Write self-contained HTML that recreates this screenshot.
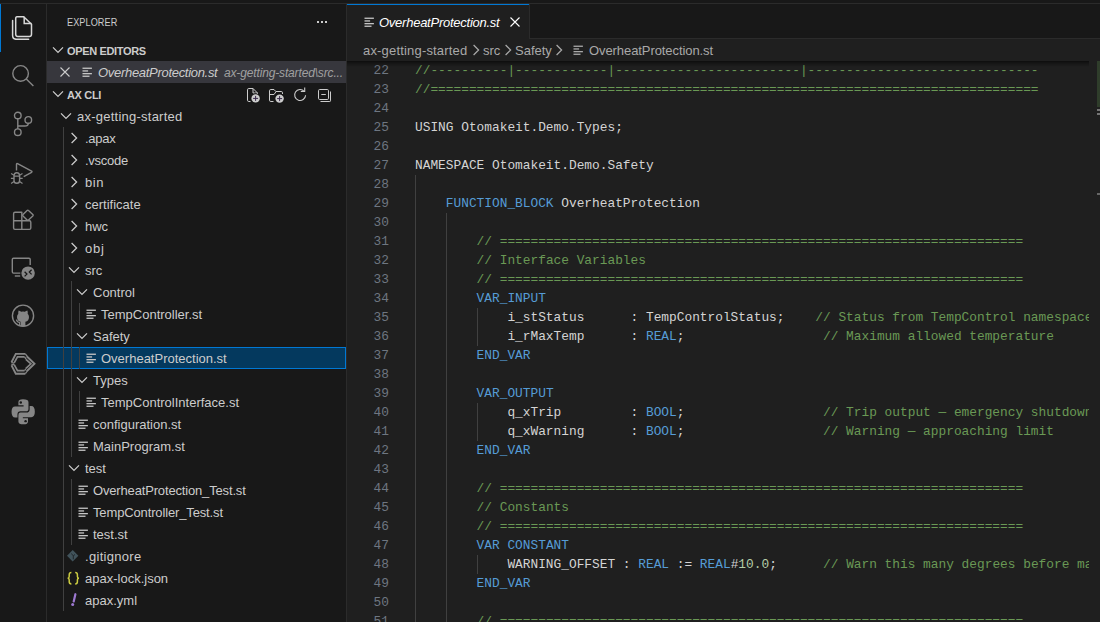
<!DOCTYPE html>
<html><head><meta charset="utf-8"><style>
*{margin:0;padding:0;box-sizing:border-box}
html,body{width:1100px;height:622px;overflow:hidden;background:#181818}
body{position:relative;font-family:"Liberation Sans",sans-serif;color:#cccccc}
.a{position:absolute}
#topline{left:0;top:3px;width:1100px;height:1px;background:#2b2b2b}
#act{left:0;top:4px;width:46px;height:618px;background:#181818}
#actb{left:46px;top:4px;width:1px;height:618px;background:#2b2b2b}
#side{left:47px;top:4px;width:299px;height:618px;background:#181818;overflow:hidden}
#sideb{left:346px;top:4px;width:1px;height:618px;background:#2b2b2b}
#ed{left:347px;top:4px;width:753px;height:618px;background:#1f1f1f;overflow:hidden}
.row{position:absolute;left:0;width:299px;height:22px;font-size:13px;line-height:24px;white-space:nowrap;color:#cccccc}
.lbl{position:absolute;top:0}
.hdr{font-weight:bold;font-size:11px}
.guide{position:absolute;width:1px;background:#404040}
.code{position:absolute;left:0;width:753px;height:19px;font-family:"Liberation Mono",monospace;font-size:12.83px;line-height:19px;white-space:pre;color:#d4d4d4}
.ln{position:absolute;left:0;width:42px;text-align:right;color:#6e7681}
.tx{position:absolute;left:68px}
.c{color:#6a9955}.k{color:#569cd6}.n{color:#b5cea8}
.eg{position:absolute;width:1px;background:#404040}
</style></head><body>
<div class="a" id="topline"></div>
<div class="a" id="act"></div><div class="a" id="actb"></div>
<div class="a" style="left:0;top:4px;width:1px;height:48px;background:#0078d4"></div>

<svg class="a" style="left:11px;top:16px" width="24" height="24" viewBox="0 0 24 24" fill="none" stroke="#d7d7d7" stroke-width="1.5">
<path d="M6 0.8 H12.7 L20.5 8.3 V18.2 Q20.5 20.5 18.3 20.5 H7 Q4.7 20.5 4.7 18.2 V2.9 Q4.7 0.8 6 0.8 Z" stroke-linejoin="round"/>
<path d="M13.2 0.8 V7.6 H20.5"/>
<path d="M1.6 4.5 V19.5 Q1.6 23.3 5.6 23.3 H17.6" stroke-linecap="round"/>
</svg>
<svg class="a" style="left:11px;top:63px" width="24" height="24" viewBox="0 0 24 24" fill="none" stroke="#868686" stroke-width="1.4">
<circle cx="9.6" cy="10.4" r="7.8"/><path d="M15.3 16.1 L22.4 23"/>
</svg>
<svg class="a" style="left:11px;top:111px" width="26" height="26" viewBox="0 0 26 26" fill="none" stroke="#868686" stroke-width="1.4">
<circle cx="6.8" cy="4.5" r="3.3"/><circle cx="6.8" cy="21.2" r="3.3"/><circle cx="17.3" cy="8.9" r="3.3"/>
<path d="M6.8 7.8 V17.9 M6.8 15 H13.8 Q17.3 15 17.3 12.2"/>
</svg>
<svg class="a" style="left:9px;top:159px" width="26" height="26" viewBox="0 0 26 26" fill="none" stroke="#868686" stroke-width="1.4">
<path d="M7.5 11.5 V5.3 Q7.5 4.1 8.6 4.7 L22.6 12.1 Q23.4 12.7 22.6 13.3 L14.7 17.6" stroke-linejoin="round"/>
<path d="M5 17.3 Q5 13.8 7.8 13.8 Q10.6 13.8 10.6 17.3 V21.5 Q10.6 24.3 7.8 24.3 Q5 24.3 5 21.5 Z"/>
<path d="M5 17.1 H10.6 M2.1 14.5 L5 16.2 M13.5 14.5 L10.6 16.2 M1.9 19.4 H5 M10.6 19.4 H13.7 M2.1 24.6 L5 22.6 M13.5 24.6 L10.6 22.6" stroke-width="1.2"/>
</svg>
<svg class="a" style="left:10px;top:207px" width="26" height="26" viewBox="0 0 26 26" fill="none" stroke="#868686" stroke-width="1.4" stroke-linejoin="round">
<path d="M5 5.3 H11.8 V13.8 H19.4 Q20.8 13.8 20.8 15.2 V21 Q20.8 22.4 19.4 22.4 H5 Q3.6 22.4 3.6 21 V6.7 Q3.6 5.3 5 5.3 Z M3.6 13.8 H11.8 V22.4"/>
<path d="M17.1 3.6 Q17.8 2.9 18.5 3.6 L22.8 7.6 Q23.5 8.3 22.8 9 L18.5 13 Q17.8 13.7 17.1 13 L13 9 Q12.3 8.3 13 7.6 Z"/>
</svg>
<svg class="a" style="left:10px;top:255px" width="26" height="26" viewBox="0 0 26 26">
<path d="M11 18.1 H3.5 Q2.3 18.1 2.3 16.8 V4.5 Q2.3 3.3 3.5 3.3 H19 Q20.2 3.3 20.2 4.5 V10" fill="none" stroke="#868686" stroke-width="1.4"/>
<path d="M4.8 21 H10.2" stroke="#868686" stroke-width="1.4"/>
<circle cx="18.1" cy="18.1" r="7.9" fill="#181818"/>
<circle cx="18.1" cy="18.1" r="6.7" fill="#868686"/>
<path d="M14.6 16.8 L16.9 19.1 L14.6 21.4 M21.6 14.8 L19.3 17.1 L21.6 19.4" fill="none" stroke="#181818" stroke-width="1.3"/>
</svg>
<svg class="a" style="left:10px;top:303px" width="26" height="26" viewBox="0 0 26 26">
<circle cx="13" cy="12.7" r="10.6" fill="none" stroke="#868686" stroke-width="1.4"/>
<path d="M9.6 23 V19.5 Q6.8 19.2 6.3 16.6 Q6.4 17.5 8 18.5" fill="none" stroke="#868686" stroke-width="1.1"/>
<path d="M10.6 23.2 V18.8 Q7 18 7 14 Q7 12 8.3 10.7 Q8 9.3 8.6 7.6 Q10 7.8 11.2 8.8 Q13 8.3 14.8 8.8 Q16.1 7.8 17.4 7.6 Q18 9.3 17.7 10.7 Q19 12 19 14 Q19 18 15.4 18.8 V23.2 Z" fill="#868686"/>
</svg>
<svg class="a" style="left:7px;top:346px" width="32" height="32" viewBox="0 0 32 32" fill="none" stroke="#868686" stroke-width="1.9" stroke-linejoin="miter">
<path d="M18.4 7.9 H8.8 L4.5 16.2 M4.5 19.4 L8.8 27.7 H18.4"/>
<path d="M17.6 10.9 H10.5 L7.2 16.9 M7.2 18.7 L10.5 24.7 H17.6" stroke-width="1.7"/>
<path d="M4.3 16.6 L7.3 17.2 M4.3 19 L7.3 18.4" stroke-width="1.3"/>
<path d="M19.7 10.3 L27.5 17.8 L19.7 25.3"/>
<path d="M18.9 13.3 L23.9 17.8 L18.9 22.3" stroke-width="1.7"/>
<path d="M18.4 7.9 L20 10.2 M18.4 27.7 L20 25.4 M17.6 10.9 L19 13.1 M17.6 24.7 L19 22.5" stroke-width="1.3"/>
</svg>
<svg class="a" style="left:7px;top:394px" width="32" height="32" viewBox="0 0 32 32"><g transform="translate(16.2 17.8) scale(1.2) translate(-13 -13)">
<path fill="#868686" d="M12.8 2.6 Q9 2.6 9 5 V7.6 H13.3 V8.5 H6.3 Q3.3 8.5 3.3 13 Q3.3 17.8 6.3 17.8 H8.2 V15.2 Q8.2 12.6 10.8 12.6 H15.3 Q17.4 12.6 17.4 10.4 V5 Q17.4 2.6 12.8 2.6 Z M10.9 4.2 A1 1 0 1 0 10.91 4.2 Z"/>
<path fill="#868686" d="M13.2 23.4 Q17 23.4 17 21 V18.4 H12.7 V17.5 H19.7 Q22.7 17.5 22.7 13 Q22.7 8.2 19.7 8.2 H18.4 V10.8 Q18.4 13.6 15.5 13.6 H10.8 Q9 13.6 9 15.6 V21 Q9 23.4 13.2 23.4 Z"/>
<circle cx="11" cy="5.2" r="1" fill="#181818"/><circle cx="15" cy="20.8" r="1" fill="#181818"/>
</g></svg>

<div class="a" id="side"><div class="a" style="left:20px;top:1px;height:35px;line-height:35px;font-size:11px;color:#cccccc;letter-spacing:0.1px;transform:scaleX(0.83);transform-origin:0 0">EXPLORER</div><div class="a" style="left:270px;top:17px;width:2px;height:2px;background:#cccccc"></div><div class="a" style="left:274px;top:17px;width:2px;height:2px;background:#cccccc"></div><div class="a" style="left:278px;top:17px;width:2px;height:2px;background:#cccccc"></div><svg class="a" style="left:2.5px;top:38px" width="16" height="16" viewBox="0 0 16 16"><path d="M3 5.4 L8 10.4 L13 5.4" fill="none" stroke="#cccccc" stroke-width="1.25"/></svg><div class="row hdr" style="top:35px"><span class="lbl" style="left:20px;letter-spacing:-0.35px">OPEN EDITORS</span></div><div class="a" style="left:0;top:57px;width:299px;height:22px;background:#37373d"></div><svg class="a" style="left:13px;top:63px" width="10" height="10" viewBox="0 0 10 10"><path d="M0.5 0.5 L9.5 9.5 M9.5 0.5 L0.5 9.5" stroke="#cccccc" stroke-width="1.1"/></svg><svg class="a" style="left:33px;top:60px" width="16" height="16" viewBox="0 0 16 16">
<g fill="#c5c5c5"><rect x="2.5" y="3.6" width="9.4" height="1.3"/><rect x="2.5" y="6.3" width="5.6" height="1.3"/><rect x="2.5" y="9" width="9.4" height="1.3"/><rect x="2.5" y="11.6" width="7" height="1.3"/></g></svg><div class="row" style="top:57px"><span class="lbl" style="left:51px;font-style:italic;letter-spacing:-0.3px">OverheatProtection.st</span><span class="lbl" style="left:177px;font-style:italic;font-size:12px;color:#a0a0a0;letter-spacing:-0.15px">ax-getting-started\src...</span></div><svg class="a" style="left:2.5px;top:82px" width="16" height="16" viewBox="0 0 16 16"><path d="M3 5.4 L8 10.4 L13 5.4" fill="none" stroke="#cccccc" stroke-width="1.25"/></svg><div class="row hdr" style="top:79px"><span class="lbl" style="left:20px;letter-spacing:-0.35px">AX CLI</span></div><svg class="a" style="left:10.5px;top:104px" width="16" height="16" viewBox="0 0 16 16"><path d="M3 5.4 L8 10.4 L13 5.4" fill="none" stroke="#cccccc" stroke-width="1.25"/></svg><div class="row" style="top:101px"><span class="lbl" style="left:30px;letter-spacing:0.24px">ax-getting-started</span></div><svg class="a" style="left:18.5px;top:126px" width="16" height="16" viewBox="0 0 16 16"><path d="M5.6 3 L10.6 8 L5.6 13" fill="none" stroke="#cccccc" stroke-width="1.25"/></svg><div class="row" style="top:123px"><span class="lbl" style="left:38px;letter-spacing:-0.25px">.apax</span></div><svg class="a" style="left:18.5px;top:148px" width="16" height="16" viewBox="0 0 16 16"><path d="M5.6 3 L10.6 8 L5.6 13" fill="none" stroke="#cccccc" stroke-width="1.25"/></svg><div class="row" style="top:145px"><span class="lbl" style="left:38px;letter-spacing:-0.25px">.vscode</span></div><svg class="a" style="left:18.5px;top:170px" width="16" height="16" viewBox="0 0 16 16"><path d="M5.6 3 L10.6 8 L5.6 13" fill="none" stroke="#cccccc" stroke-width="1.25"/></svg><div class="row" style="top:167px"><span class="lbl" style="left:38px;letter-spacing:0.6px">bin</span></div><svg class="a" style="left:18.5px;top:192px" width="16" height="16" viewBox="0 0 16 16"><path d="M5.6 3 L10.6 8 L5.6 13" fill="none" stroke="#cccccc" stroke-width="1.25"/></svg><div class="row" style="top:189px"><span class="lbl" style="left:38px;letter-spacing:0px">certificate</span></div><svg class="a" style="left:18.5px;top:214px" width="16" height="16" viewBox="0 0 16 16"><path d="M5.6 3 L10.6 8 L5.6 13" fill="none" stroke="#cccccc" stroke-width="1.25"/></svg><div class="row" style="top:211px"><span class="lbl" style="left:38px;letter-spacing:0px">hwc</span></div><svg class="a" style="left:18.5px;top:236px" width="16" height="16" viewBox="0 0 16 16"><path d="M5.6 3 L10.6 8 L5.6 13" fill="none" stroke="#cccccc" stroke-width="1.25"/></svg><div class="row" style="top:233px"><span class="lbl" style="left:38px;letter-spacing:0.8px">obj</span></div><svg class="a" style="left:18.5px;top:258px" width="16" height="16" viewBox="0 0 16 16"><path d="M3 5.4 L8 10.4 L13 5.4" fill="none" stroke="#cccccc" stroke-width="1.25"/></svg><div class="row" style="top:255px"><span class="lbl" style="left:38px;letter-spacing:0px">src</span></div><svg class="a" style="left:26.5px;top:280px" width="16" height="16" viewBox="0 0 16 16"><path d="M3 5.4 L8 10.4 L13 5.4" fill="none" stroke="#cccccc" stroke-width="1.25"/></svg><div class="row" style="top:277px"><span class="lbl" style="left:46px;letter-spacing:0px">Control</span></div><svg class="a" style="left:37px;top:302px" width="16" height="16" viewBox="0 0 16 16">
<g fill="#c5c5c5"><rect x="2.5" y="3.6" width="9.4" height="1.3"/><rect x="2.5" y="6.3" width="5.6" height="1.3"/><rect x="2.5" y="9" width="9.4" height="1.3"/><rect x="2.5" y="11.6" width="7" height="1.3"/></g></svg><div class="row" style="top:299px"><span class="lbl" style="left:54px;letter-spacing:0px">TempController.st</span></div><svg class="a" style="left:26.5px;top:324px" width="16" height="16" viewBox="0 0 16 16"><path d="M3 5.4 L8 10.4 L13 5.4" fill="none" stroke="#cccccc" stroke-width="1.25"/></svg><div class="row" style="top:321px"><span class="lbl" style="left:46px;letter-spacing:0px">Safety</span></div><div class="a" style="left:0;top:343px;width:299px;height:22px;background:#04395e;border:1px solid #0078d4"></div><svg class="a" style="left:37px;top:346px" width="16" height="16" viewBox="0 0 16 16">
<g fill="#c5c5c5"><rect x="2.5" y="3.6" width="9.4" height="1.3"/><rect x="2.5" y="6.3" width="5.6" height="1.3"/><rect x="2.5" y="9" width="9.4" height="1.3"/><rect x="2.5" y="11.6" width="7" height="1.3"/></g></svg><div class="row" style="top:343px"><span class="lbl" style="left:54px;letter-spacing:0px">OverheatProtection.st</span></div><svg class="a" style="left:26.5px;top:368px" width="16" height="16" viewBox="0 0 16 16"><path d="M3 5.4 L8 10.4 L13 5.4" fill="none" stroke="#cccccc" stroke-width="1.25"/></svg><div class="row" style="top:365px"><span class="lbl" style="left:46px;letter-spacing:0px">Types</span></div><svg class="a" style="left:37px;top:390px" width="16" height="16" viewBox="0 0 16 16">
<g fill="#c5c5c5"><rect x="2.5" y="3.6" width="9.4" height="1.3"/><rect x="2.5" y="6.3" width="5.6" height="1.3"/><rect x="2.5" y="9" width="9.4" height="1.3"/><rect x="2.5" y="11.6" width="7" height="1.3"/></g></svg><div class="row" style="top:387px"><span class="lbl" style="left:54px;letter-spacing:0px">TempControlInterface.st</span></div><svg class="a" style="left:29px;top:412px" width="16" height="16" viewBox="0 0 16 16">
<g fill="#c5c5c5"><rect x="2.5" y="3.6" width="9.4" height="1.3"/><rect x="2.5" y="6.3" width="5.6" height="1.3"/><rect x="2.5" y="9" width="9.4" height="1.3"/><rect x="2.5" y="11.6" width="7" height="1.3"/></g></svg><div class="row" style="top:409px"><span class="lbl" style="left:46px;letter-spacing:0px">configuration.st</span></div><svg class="a" style="left:29px;top:434px" width="16" height="16" viewBox="0 0 16 16">
<g fill="#c5c5c5"><rect x="2.5" y="3.6" width="9.4" height="1.3"/><rect x="2.5" y="6.3" width="5.6" height="1.3"/><rect x="2.5" y="9" width="9.4" height="1.3"/><rect x="2.5" y="11.6" width="7" height="1.3"/></g></svg><div class="row" style="top:431px"><span class="lbl" style="left:46px;letter-spacing:0px">MainProgram.st</span></div><svg class="a" style="left:18.5px;top:456px" width="16" height="16" viewBox="0 0 16 16"><path d="M3 5.4 L8 10.4 L13 5.4" fill="none" stroke="#cccccc" stroke-width="1.25"/></svg><div class="row" style="top:453px"><span class="lbl" style="left:38px;letter-spacing:0px">test</span></div><svg class="a" style="left:29px;top:478px" width="16" height="16" viewBox="0 0 16 16">
<g fill="#c5c5c5"><rect x="2.5" y="3.6" width="9.4" height="1.3"/><rect x="2.5" y="6.3" width="5.6" height="1.3"/><rect x="2.5" y="9" width="9.4" height="1.3"/><rect x="2.5" y="11.6" width="7" height="1.3"/></g></svg><div class="row" style="top:475px"><span class="lbl" style="left:46px;letter-spacing:-0.16px">OverheatProtection_Test.st</span></div><svg class="a" style="left:29px;top:500px" width="16" height="16" viewBox="0 0 16 16">
<g fill="#c5c5c5"><rect x="2.5" y="3.6" width="9.4" height="1.3"/><rect x="2.5" y="6.3" width="5.6" height="1.3"/><rect x="2.5" y="9" width="9.4" height="1.3"/><rect x="2.5" y="11.6" width="7" height="1.3"/></g></svg><div class="row" style="top:497px"><span class="lbl" style="left:46px;letter-spacing:-0.14px">TempController_Test.st</span></div><svg class="a" style="left:29px;top:522px" width="16" height="16" viewBox="0 0 16 16">
<g fill="#c5c5c5"><rect x="2.5" y="3.6" width="9.4" height="1.3"/><rect x="2.5" y="6.3" width="5.6" height="1.3"/><rect x="2.5" y="9" width="9.4" height="1.3"/><rect x="2.5" y="11.6" width="7" height="1.3"/></g></svg><div class="row" style="top:519px"><span class="lbl" style="left:46px;letter-spacing:0px">test.st</span></div><div class="row" style="top:541px"><span class="lbl" style="left:38px;letter-spacing:0.3px">.gitignore</span></div><div class="row" style="top:563px"><span class="lbl" style="left:38px;letter-spacing:0px">apax-lock.json</span></div><div class="row" style="top:585px"><span class="lbl" style="left:38px;letter-spacing:0px">apax.yml</span></div><div class="guide" style="left:16px;top:123px;height:484px"></div><div class="guide" style="left:24px;top:277px;height:176px"></div><div class="guide" style="left:32px;top:299px;height:22px"></div><div class="guide" style="left:32px;top:343px;height:22px"></div><div class="guide" style="left:32px;top:387px;height:22px"></div><div class="guide" style="left:24px;top:475px;height:66px"></div></div><div class="a" id="sideb"></div>
<div class="a" id="ed"><div class="a" style="left:0;top:0;width:753px;height:35px;background:#181818"></div><div class="a" style="left:0;top:34px;width:753px;height:1px;background:#2b2b2b"></div><div class="a" style="left:0;top:0;width:182px;height:35px;background:#1f1f1f;border-top:1px solid #0078d4"></div><div class="a" style="left:182px;top:0;width:1px;height:34px;background:#2b2b2b"></div><svg class="a" style="left:15px;top:10px" width="16" height="16" viewBox="0 0 16 16">
<g fill="#c5c5c5"><rect x="2.5" y="3.6" width="9.4" height="1.3"/><rect x="2.5" y="6.3" width="5.6" height="1.3"/><rect x="2.5" y="9" width="9.4" height="1.3"/><rect x="2.5" y="11.6" width="7" height="1.3"/></g></svg><div class="a" style="left:32px;top:1px;height:35px;line-height:35px;font-size:13px;font-style:italic;color:#ffffff;letter-spacing:-0.25px">OverheatProtection.st</div><svg class="a" style="left:163px;top:13px" width="10" height="10" viewBox="0 0 10 10"><path d="M0.5 0.5 L9.5 9.5 M9.5 0.5 L0.5 9.5" stroke="#ffffff" stroke-width="1.1"/></svg><div class="a" style="left:16px;top:36px;height:22px;line-height:22px;font-size:13px;color:#a9a9a9;white-space:nowrap;letter-spacing:0.18px">ax-getting-started</div><svg class="a" style="left:120.5px;top:38px" width="16" height="16" viewBox="0 0 16 16"><path d="M5.6 3 L10.6 8 L5.6 13" fill="none" stroke="#a9a9a9" stroke-width="1.25"/></svg><div class="a" style="left:136px;top:36px;height:22px;line-height:22px;font-size:13px;color:#a9a9a9">src</div><svg class="a" style="left:152.5px;top:38px" width="16" height="16" viewBox="0 0 16 16"><path d="M5.6 3 L10.6 8 L5.6 13" fill="none" stroke="#a9a9a9" stroke-width="1.25"/></svg><div class="a" style="left:168px;top:36px;height:22px;line-height:22px;font-size:13px;color:#a9a9a9">Safety</div><svg class="a" style="left:203.5px;top:38px" width="16" height="16" viewBox="0 0 16 16"><path d="M5.6 3 L10.6 8 L5.6 13" fill="none" stroke="#a9a9a9" stroke-width="1.25"/></svg><svg class="a" style="left:224px;top:38px" width="16" height="16" viewBox="0 0 16 16">
<g fill="#a9a9a9"><rect x="2.5" y="3.6" width="9.4" height="1.3"/><rect x="2.5" y="6.3" width="5.6" height="1.3"/><rect x="2.5" y="9" width="9.4" height="1.3"/><rect x="2.5" y="11.6" width="7" height="1.3"/></g></svg><div class="a" style="left:242px;top:36px;height:22px;line-height:22px;font-size:13px;color:#a9a9a9;white-space:nowrap;letter-spacing:-0.08px">OverheatProtection.st</div><div class="a" style="left:0;top:57px;width:753px;height:561px;overflow:hidden"></div><div class="a" style="left:0;top:0;width:742px;height:618px;overflow:hidden"><div class="code" style="top:57px"><span class="ln">22</span><span class="tx"><span class="c">//----------|------------|------------------------|------------------------------</span></span></div><div class="code" style="top:76px"><span class="ln">23</span><span class="tx"><span class="c">//===============================================================================</span></span></div><div class="code" style="top:95px"><span class="ln">24</span><span class="tx"></span></div><div class="code" style="top:114px"><span class="ln">25</span><span class="tx"><span>USING Otomakeit.Demo.Types;</span></span></div><div class="code" style="top:133px"><span class="ln">26</span><span class="tx"></span></div><div class="code" style="top:152px"><span class="ln">27</span><span class="tx"><span>NAMESPACE Otomakeit.Demo.Safety</span></span></div><div class="code" style="top:171px"><span class="ln">28</span><span class="tx"></span></div><div class="code" style="top:190px"><span class="ln">29</span><span class="tx"><span>    </span><span class="k">FUNCTION_BLOCK</span><span> OverheatProtection</span></span></div><div class="code" style="top:209px"><span class="ln">30</span><span class="tx"></span></div><div class="code" style="top:228px"><span class="ln">31</span><span class="tx"><span>        </span><span class="c">// ====================================================================</span></span></div><div class="code" style="top:247px"><span class="ln">32</span><span class="tx"><span>        </span><span class="c">// Interface Variables</span></span></div><div class="code" style="top:266px"><span class="ln">33</span><span class="tx"><span>        </span><span class="c">// ====================================================================</span></span></div><div class="code" style="top:285px"><span class="ln">34</span><span class="tx"><span>        </span><span class="k">VAR_INPUT</span></span></div><div class="code" style="top:304px"><span class="ln">35</span><span class="tx"><span>            i_stStatus      : TempControlStatus;    </span><span class="c">// Status from TempControl namespace</span></span></div><div class="code" style="top:323px"><span class="ln">36</span><span class="tx"><span>            i_rMaxTemp      : </span><span class="k">REAL</span><span>;                  </span><span class="c">// Maximum allowed temperature</span></span></div><div class="code" style="top:342px"><span class="ln">37</span><span class="tx"><span>        </span><span class="k">END_VAR</span></span></div><div class="code" style="top:361px"><span class="ln">38</span><span class="tx"></span></div><div class="code" style="top:380px"><span class="ln">39</span><span class="tx"><span>        </span><span class="k">VAR_OUTPUT</span></span></div><div class="code" style="top:399px"><span class="ln">40</span><span class="tx"><span>            q_xTrip         : </span><span class="k">BOOL</span><span>;                  </span><span class="c">// Trip output — emergency shutdown</span></span></div><div class="code" style="top:418px"><span class="ln">41</span><span class="tx"><span>            q_xWarning      : </span><span class="k">BOOL</span><span>;                  </span><span class="c">// Warning — approaching limit</span></span></div><div class="code" style="top:437px"><span class="ln">42</span><span class="tx"><span>        </span><span class="k">END_VAR</span></span></div><div class="code" style="top:456px"><span class="ln">43</span><span class="tx"></span></div><div class="code" style="top:475px"><span class="ln">44</span><span class="tx"><span>        </span><span class="c">// ====================================================================</span></span></div><div class="code" style="top:494px"><span class="ln">45</span><span class="tx"><span>        </span><span class="c">// Constants</span></span></div><div class="code" style="top:513px"><span class="ln">46</span><span class="tx"><span>        </span><span class="c">// ====================================================================</span></span></div><div class="code" style="top:532px"><span class="ln">47</span><span class="tx"><span>        </span><span class="k">VAR CONSTANT</span></span></div><div class="code" style="top:551px"><span class="ln">48</span><span class="tx"><span>            WARNING_OFFSET : </span><span class="k">REAL</span><span> := </span><span class="k">REAL</span><span>#</span><span class="n">10.0</span><span>;      </span><span class="c">// Warn this many degrees before max</span></span></div><div class="code" style="top:570px"><span class="ln">49</span><span class="tx"><span>        </span><span class="k">END_VAR</span></span></div><div class="code" style="top:589px"><span class="ln">50</span><span class="tx"></span></div><div class="code" style="top:608px"><span class="ln">51</span><span class="tx"><span>        </span><span class="c">// ====================================================================</span></span></div><div class="eg" style="left:68px;top:171px;height:456px"></div><div class="eg" style="left:99px;top:209px;height:418px"></div><div class="eg" style="left:130px;top:304px;height:38px"></div><div class="eg" style="left:130px;top:399px;height:38px"></div><div class="eg" style="left:130px;top:551px;height:19px"></div></div><div class="a" style="left:0;top:57px;width:742px;height:6px;background:linear-gradient(#0d0d0d 0%, rgba(0,0,0,0.35) 30%, rgba(0,0,0,0) 100%)"></div><div class="a" style="left:750px;top:57px;width:3px;height:46px;background:#2f3d2b"></div><div class="a" style="left:750px;top:105px;width:3px;height:2px;background:#757575"></div><div class="a" style="left:750px;top:109px;width:3px;height:2px;background:#757575"></div><div class="a" style="left:750px;top:189px;width:3px;height:2px;background:#666666"></div></div>
<svg class="a" style="left:0;top:0;z-index:5" width="1100" height="622" viewBox="0 0 1100 622">
<path d="M72.7 550.1 L78.4 555.8 L72.7 561.5 L67 555.8 Z" fill="#41535b"/>
<path d="M71.2 553.6 L73.3 555.7 V559.3 M73.3 555.7 L75 554.5" stroke="#1c2226" stroke-width="0.9" fill="none"/>
<path d="M71.4 572.6 Q69.2 572.6 69.2 574.8 V576.6 Q69.2 578.2 67.6 578.2 Q69.2 578.2 69.2 579.8 V581.8 Q69.2 584 71.4 584" fill="none" stroke="#cbcb41" stroke-width="1.5"/>
<path d="M75.2 572.6 Q77.4 572.6 77.4 574.8 V576.6 Q77.4 578.2 79 578.2 Q77.4 578.2 77.4 579.8 V581.8 Q77.4 584 75.2 584" fill="none" stroke="#cbcb41" stroke-width="1.5"/>
<path d="M75.4 594.2 L73.7 601.4" stroke="#9c78d0" stroke-width="2.2" stroke-linecap="round"/>
<circle cx="72.7" cy="604.6" r="1.5" fill="#9c78d0"/>
</svg>
<svg class="a" style="left:0;top:0;z-index:5" width="1100" height="622" viewBox="0 0 1100 622" fill="none" stroke="#cccccc" stroke-width="1">
<path d="M250.5 101.5 H248.8 Q247.5 101.5 247.5 100.2 V89.8 Q247.5 88.5 248.8 88.5 H253 L257.5 93 V94"/><path d="M253 88.5 V93 H257.5"/>
<circle cx="255.6" cy="98.4" r="5.2" fill="#181818" stroke="none"/><circle cx="255.6" cy="98.4" r="4.2" fill="#cccccc" stroke="none"/><path d="M255.6 95.9 V100.9 M253.1 98.4 H258.1" stroke="#3a2a4a" stroke-width="1"/>
<path d="M273.5 101.5 H270.8 Q269.5 101.5 269.5 100.2 V90.8 Q269.5 89.5 270.8 89.5 H274 L275.8 91.5 H281.2 Q282.5 91.5 282.5 92.8 V94"/><path d="M269.5 94.5 H274 L275.8 92"/>
<circle cx="279.6" cy="98.6" r="5.2" fill="#181818" stroke="none"/><circle cx="279.6" cy="98.6" r="4.2" fill="#cccccc" stroke="none"/><path d="M279.6 96.1 V101.1 M277.1 98.6 H282.1" stroke="#3a2a4a" stroke-width="1"/>
<path d="M304.2 91.3 A5.5 5.5 0 1 0 305.6 95.3" stroke-width="1.1"/><path d="M300.8 91.5 H304.7 V87.6" stroke-width="1.1"/>
<rect x="318.5" y="89.5" width="10" height="10" rx="1.2"/><path d="M321.3 94.5 H325.8"/><path d="M330.5 91.5 V100.8 Q330.5 101.5 329.8 101.5 H320.5"/>
</svg>
</body></html>
